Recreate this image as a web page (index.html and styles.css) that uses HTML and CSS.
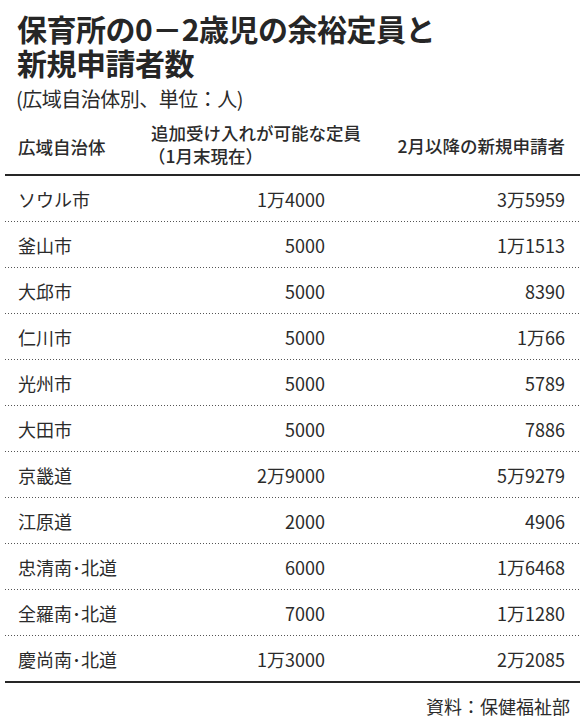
FILE: index.html
```html
<!DOCTYPE html>
<html lang="ja">
<head>
<meta charset="utf-8">
<link rel="stylesheet" href="styles.css">
</head>
<body>
<div class="page">
  <h1 class="title">保育所の0－2歳児の余裕定員と<br>新規申請者数</h1>
  <p class="subtitle">(広域自治体別、単位：人)</p>
  <div class="table">
    <div class="row head">
      <div class="c1">広域自治体</div>
      <div class="c2">追加受け入れが可能な定員<br><span class="sub">（1月末現在）</span></div>
      <div class="c3">2月以降の新規申請者</div>
    </div>
    <div class="row"><div class="c1">ソウル市</div><div class="c2">1万4000</div><div class="c3">3万5959</div></div>
    <div class="row"><div class="c1">釜山市</div><div class="c2">5000</div><div class="c3">1万1513</div></div>
    <div class="row"><div class="c1">大邱市</div><div class="c2">5000</div><div class="c3">8390</div></div>
    <div class="row"><div class="c1">仁川市</div><div class="c2">5000</div><div class="c3">1万66</div></div>
    <div class="row"><div class="c1">光州市</div><div class="c2">5000</div><div class="c3">5789</div></div>
    <div class="row"><div class="c1">大田市</div><div class="c2">5000</div><div class="c3">7886</div></div>
    <div class="row"><div class="c1">京畿道</div><div class="c2">2万9000</div><div class="c3">5万9279</div></div>
    <div class="row"><div class="c1">江原道</div><div class="c2">2000</div><div class="c3">4906</div></div>
    <div class="row"><div class="c1">忠清南･北道</div><div class="c2">6000</div><div class="c3">1万6468</div></div>
    <div class="row"><div class="c1">全羅南･北道</div><div class="c2">7000</div><div class="c3">1万1280</div></div>
    <div class="row last"><div class="c1">慶尚南･北道</div><div class="c2">1万3000</div><div class="c3">2万2085</div></div>
  </div>
  <p class="source">資料：保健福祉部</p>
</div>
</body>
</html>
```

FILE: styles.css
```css
html, body {
  margin: 0;
  padding: 0;
  background: #ffffff;
}
body {
  font-family: "Noto Sans CJK JP", "Noto Sans", sans-serif;
  color: #2b2b2b;
}
.page {
  width: 575px;
  padding: 11px 5px 0 5px;
}
.title {
  margin: 0 0 0 12px;
  font-size: 30px;
  line-height: 34px;
  font-weight: 700;
  letter-spacing: -0.5px;
  color: #262626;
}
.subtitle {
  margin: 7px 0 0 11px;
  font-size: 20px;
  line-height: 26px;
  letter-spacing: -0.5px;
}
.table {
  margin-top: 6px;
}
.row {
  display: grid;
  grid-template-columns: 146px 180px 1fr;
  align-items: center;
  height: 45px;
  font-size: 18px;
  padding-bottom: 1px;
  background: repeating-linear-gradient(to right, #555 0 1px, transparent 1px 3px) bottom left / 100% 1px no-repeat;
}
.row.head {
  height: 56px;
  padding-bottom: 0;
  background: none;
  border-bottom: 2px solid #262626;
  font-weight: 500;
  font-size: 17.5px;
  line-height: 23px;
}
.row.last {
  background: none;
  padding-bottom: 0;
  border-bottom: 2px solid #262626;
}
.c1 {
  padding-left: 13px;
}
.c2 {
  text-align: right;
  padding-right: 6px;
}
.c3 {
  text-align: right;
  padding-right: 15px;
}
.head .c2 {
  text-align: left;
  padding-right: 0;
  white-space: nowrap;
  align-self: start;
  padding-top: 3px;
}
.head .c3 {
  padding-top: 16px;
  align-self: start;
}
.sub {
  margin-left: -3px;
}
.source {
  margin: 11px 10px 0 0;
  text-align: right;
  font-size: 18px;
  line-height: 24px;
}
```
